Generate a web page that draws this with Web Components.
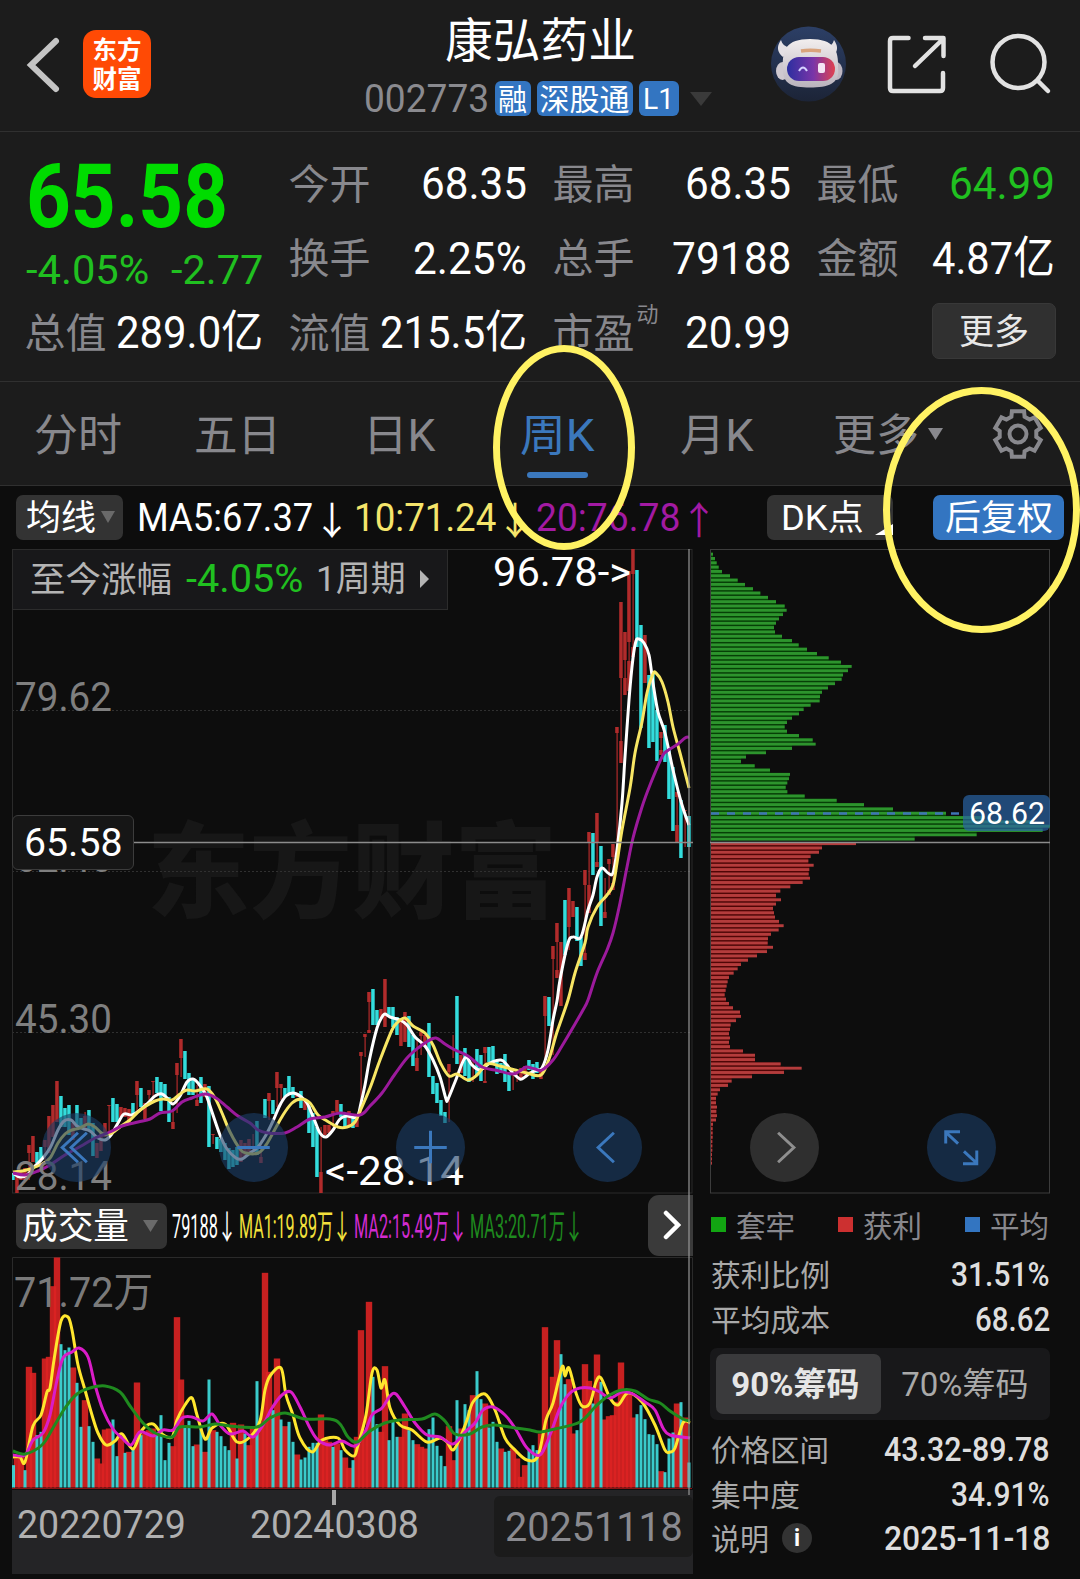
<!DOCTYPE html>
<html lang="zh-CN">
<head>
<meta charset="utf-8">
<title>康弘药业 002773</title>
<style>
  body {
    margin: 0;
    background: #0d0d0d;
    font-family: Roboto, 'Noto Sans CJK SC', sans-serif;
    color: #fff;
  }
</style>
</head>
<body>
<stock-page></stock-page>

<script>
/* ---------- helpers ---------- */

function mount(el, css, html) {
  if (!el.shadowRoot) el.attachShadow({ mode: 'open' });
  el.shadowRoot.innerHTML = `<style>*{box-sizing:border-box}${css}</style>${html}`;
}

// Catmull-Rom spline through "x,y x,y ..." points
function spline(str) {
  const p = str.trim().split(/\s+/).map(s => s.split(',').map(Number));
  let d = `M${p[0]}`;
  for (let i = 0; i < p.length - 1; i++) {
    const a = p[i - 1] || p[i], b = p[i], c = p[i + 1], e = p[i + 2] || c;
    d += `C${(b[0] + (c[0] - a[0]) / 6).toFixed(1)},${(b[1] + (c[1] - a[1]) / 6).toFixed(1)}`
      + ` ${(c[0] - (e[0] - b[0]) / 6).toFixed(1)},${(c[1] - (e[1] - b[1]) / 6).toFixed(1)} ${c}`;
  }
  return d;
}

const svgText = (x, y, w, size, fill, text, extra = '') =>
  `<text x="${x}" y="${y}" font-size="${size}" fill="${fill}" textLength="${w}" lengthAdjust="spacingAndGlyphs" ${extra}>${text}</text>`;

/* ---------- chart data ---------- */

// one token per week: r/c, then bodies "top-bottom"; the wick joins the extremes
const CANDLES = `c1173-1180 r1173-1193 r1170-1180 r1168-1180 r1145-1153/1180-1180 r1136-1162 c1152-1163 c1147-1160
r1140-1147/1160-1160 r1116-1153 r1105-1137 r1081-1122 c1096-1127 c1108-1127 c1105-1135 r1123-1140 c1105-1127 c1118-1128
r1112-1112/1116-1130 c1110-1130 c1123-1156 r1143-1158 r1133-1151 r1123-1137 r1105-1106/1133-1133 c1098-1122 c1104-1122
r1107-1117 r1108-1117 r1109-1123 c1103-1115 r1081-1095/1113-1113 c1088-1107 r1103-1119 r1090-1095/1100-1100
r1081-1082/1097-1097 c1077-1093 c1082-1111 c1084-1097 c1097-1122 r1110-1110/1122-1129 r1063-1075/1113-1113
r1039-1058/1077-1077 c1051-1079 c1073-1095 c1078-1095 r1085-1085/1100-1106 c1077-1103 r1084-1097 c1086-1147
r1134-1135/1144-1144 c1137-1149 c1139-1152 c1143-1160 c1148-1169 c1150-1167 c1147-1165 r1140-1162 r1143-1157 r1139-1153
r1134-1134/1150-1150 c1121-1155 r1140-1140/1157-1163 c1099-1118 r1093-1101/1120-1120 c1100-1114 r1072-1088/1107-1107
r1084-1088/1100-1100 c1088-1097 c1076-1095 c1087-1098 r1093-1097 c1091-1108 r1100-1110 c1106-1133 c1113-1147 c1127-1177
r1127-1127/1172-1193 r1125-1135 r1125-1133 r1111-1115/1127-1127 r1100-1112 c1104-1117 c1113-1127 r1111-1127 c1115-1128
r1115-1127 r1052-1056/1113-1113 r1034-1037/1057-1057 r992-1002/1030-1033 c989-1025 c1010-1025 r1009-1018 r979-1027
c1007-1017 c1007-1027 c1017-1035 r1020-1046 r1012-1042 c1016-1047 c1035-1066 r1040-1040/1058-1071 r1032-1036/1055-1055
r1035-1047 c1023-1077 c1076-1094 c1083-1103 c1100-1116 c1112-1123 r1064-1072/1122-1122 r1035-1035/1058-1058 c996-1064
r1055-1073 c1048-1076 c1060-1082 r1060-1060/1082-1082 c1049-1075 c1055-1081 r1047-1053/1081-1083 c1047-1062 c1046-1063
c1060-1074 c1063-1073 c1054-1082 c1072-1091 r1073-1073/1090-1090 r1070-1070/1082-1082 r1068-1080 r1066-1075 c1060-1070
c1064-1079 c1062-1073 r1070-1079 r996-1016/1063-1063 c997-1026 r946-959/1055-1055 r923-942/970-978 r942-1006 c900-955
r888-927/950-950 r901-917 c907-941 c937-966 r870-885/953-960 r832-843/885-913 c833-875 r813-843/862-867 c846-926
r878-878/912-918 r859-864/890-895 r844-857/883-890 r727-733/860-860 r602-678/741-763 r632-660/678-695 r571-642/661-691
r549-574/647-657 c570-647 c625-728 r635-683 c675-748 c673-742 c710-761 r732-738/750-755 c725-762 c747-799 c767-831
r792-797/825-842 c800-858 r810-811/847-847 c816-847`.split(/\s+/);

const MA5 = `13,1173 20,1177 27,1175 35,1166 42,1159 50,1148 58,1130 64,1121 71,1120 77,1126 84,1129 90,1131 98,1138
105,1140 111,1135 118,1123 124,1114 132,1115 140,1110 148,1103 155,1096 162,1094 168,1099 173,1104 180,1096 187,1082
193,1079 198,1083 206,1095 212,1112 220,1135 227,1149 236,1158 242,1159 250,1153 258,1147 266,1135 273,1121 280,1105
286,1096 293,1093 300,1096 307,1103 314,1119 320,1133 326,1137 333,1130 340,1119 347,1116 357,1117 361,1103 365,1085
370,1057 377,1028 382,1017 385,1014 390,1017 400,1020 407,1025 415,1037 425,1046 433,1060 440,1077 446,1099 448,1099
455,1082 465,1058 472,1065 480,1070 490,1063 501,1060 507,1065 512,1072 520,1079 525,1077 530,1073 537,1070 542,1068
548,1050 553,1020 557,1001 560,980 568,943 573,937 581,937 588,910 593,895 597,877 602,868 608,873 613,873 617,850
622,803 625,757 629,700 633,658 636,641 639,639 644,643 649,655 653,683 658,712 665,733 673,770 682,805 689,825`;
const MA10 = `13,1172 22,1171 30,1169 42,1164 50,1158 58,1143 65,1134 72,1130 80,1128 88,1124 95,1127 103,1134 112,1133
120,1127 130,1120 138,1112 146,1106 155,1101 163,1099 172,1100 180,1094 187,1090 195,1091 207,1089 215,1098 222,1113
230,1132 240,1149 246,1153 258,1153 266,1145 274,1131 283,1115 292,1103 301,1099 310,1103 318,1115 327,1121 338,1127
347,1127 355,1122 361,1109 370,1088 380,1060 392,1030 398,1022 405,1018 413,1026 425,1033 433,1045 441,1064 449,1076
457,1074 468,1080 477,1075 487,1064 500,1066 515,1070 527,1073 541,1075 549,1059 557,1032 568,1000 575,973 585,943
588,927 597,907 607,895 613,885 617,863 622,830 630,788 635,753 642,722 647,693 653,674 656,673 662,682 668,702 673,727
680,753 689,788`;
const MA20 = `13,1173 25,1175 38,1171 50,1165 65,1155 83,1145 95,1138 110,1132 122,1126 138,1122 150,1119 160,1113
172,1111 182,1102 192,1098 205,1094 216,1098 227,1107 238,1116 250,1123 258,1130 268,1133 285,1133 297,1127 310,1119
325,1117 340,1113 360,1115 370,1106 382,1093 395,1074 407,1058 418,1048 428,1041 436,1038 445,1044 455,1050 468,1056
482,1067 495,1070 512,1074 520,1071 526,1067 535,1069 542,1070 553,1060 562,1046 575,1024 583,1010 588,1000 597,973
607,950 613,933 620,903 627,867 633,838 642,807 650,785 662,757 667,751 678,744 685,738 689,737`;

// weekly volume, height in thirds of a pixel above the base line
const VOLUME = `c67 r97 r97 c52 r362 r344 c157 c167 r387 r392 r604 r690 c430 c412 c420 r360 c314 c182 r262 c184 c137 r87
r72 r174 r177 c204 c94 r152 c104 r107 c114 r315 c157 r162 r172 r177 c157 c217 c82 c134 r124 r511 r324 c180 c200 c124 r129
c177 r107 c324 r172 c167 c154 c124 c112 r194 c87 r189 c162 r127 r177 c319 r197 r644 r347 c232 r387 c204 r184 c197 c137 r99
c84 c90 c122 c134 c134 r219 r142 r137 c122 r132 c112 r90 r59 c82 r152 r472 r172 r557 c332 c190 r167 r364 c142 c202 c152
r152 r222 c172 c142 r130 r122 r117 c175 c210 c125 c95 c64 r184 r82 c262 r177 c250 c232 r277 c349 c265 r252 c180 c197 c137
r117 c107 c110 r117 r87 r32 r67 c114 c127 c112 r162 r481 c172 r332 r442 c400 c310 r325 r162 c172 c237 r370 r320 c252 r399
c317 r204 r214 r217 r257 r375 r287 r282 r210 c220 c247 c205 c160 c158 c130 r49 c46 c147 c165 r252 c256 r210 c75`.split(/\s+/);

const VMA1 = `13,1457 20,1457 25,1462 33,1426 41,1415 47,1392 50,1388 54,1360 61,1321 68,1317 72,1330 78,1365 85,1390
92,1415 98,1433 106,1445 115,1441 122,1434 133,1449 142,1430 153,1424 162,1434 172,1437 177,1420 185,1405 192,1398
197,1415 205,1439 212,1428 225,1424 237,1442 250,1437 260,1421 265,1390 270,1376 281,1368 286,1395 293,1415 300,1438
312,1452 322,1440 338,1438 345,1450 354,1456 358,1445 366,1415 372,1373 377,1370 381,1388 385,1380 390,1408 400,1425
412,1430 427,1442 440,1438 447,1442 453,1450 460,1438 467,1420 473,1402 485,1394 495,1410 505,1438 515,1450 527,1460
538,1456 546,1420 553,1403 562,1367 565,1376 569,1368 576,1393 582,1406 590,1403 596,1382 601,1378 610,1398 618,1405
628,1393 642,1402 655,1425 665,1450 670,1452 675,1448 682,1425 686,1421 690,1423`;
const VMA2 = `13,1455 25,1455 33,1440 43,1433 50,1415 57,1380 63,1358 72,1352 79,1348 88,1357 95,1385 103,1410 113,1429
122,1438 131,1445 140,1432 153,1436 163,1430 173,1430 182,1418 192,1417 203,1421 212,1414 220,1425 230,1434 243,1431
253,1437 263,1425 272,1408 282,1395 291,1392 300,1407 310,1428 318,1440 330,1445 342,1441 355,1446 365,1432 372,1415
382,1408 390,1396 396,1394 405,1407 415,1423 427,1435 440,1437 453,1444 465,1432 475,1423 483,1410 493,1407 505,1415
515,1428 527,1448 540,1455 550,1435 560,1408 570,1393 580,1388 590,1388 600,1392 610,1398 622,1392 633,1394 645,1402
655,1410 663,1428 670,1435 690,1438`;
const VMA3 = `13,1451 25,1454 42,1445 53,1428 65,1408 77,1394 90,1388 105,1386 120,1392 130,1406 143,1423 155,1433
172,1437 180,1427 200,1427 215,1424 230,1426 257,1427 270,1418 285,1413 305,1419 330,1419 340,1424 348,1437 357,1442
370,1431 385,1423 400,1420 422,1419 435,1414 445,1421 455,1434 470,1434 482,1427 495,1425 515,1428 530,1430 540,1432
555,1429 580,1422 595,1407 608,1396 622,1390 635,1391 648,1399 660,1403 670,1411 683,1419 690,1421`;

// chip distribution, bar length in thirds of a pixel
const CHIPS_LOSS = [6,12,17,23,33,57,80,102,126,148,171,195,221,227,216,204,195,189,192,213,243,263,288,318,353,390,422,
  411,396,392,372,351,333,327,326,299,278,264,243,228,221,228,264,305,314,243,165,105,90,131,177,237,234,229,224,229,281,
  377,459,546,705,822,967,1017,995,797,611];
const CHIPS_GAIN = [435,333,324,299,292,308,295,293,297,275,238,208,195,210,195,186,189,192,204,218,203,180,171,170,186,
  168,138,111,90,80,68,54,50,47,44,41,45,54,66,87,90,75,59,57,54,57,54,57,96,132,132,209,272,219,123,62,51,27,20,15,15,18,
  16,18,15,6,5,5,5,4,4,4,3,3,3];

/* ---------- text squeezed to a given width ---------- */

class FitText extends HTMLElement {
  connectedCallback() {
    const w = +this.getAttribute('w');
    mount(this, `
      :host { display: inline-block; flex: none; width: ${w}px; line-height: 1.2; white-space: nowrap; }
      span { display: inline-block; transform-origin: 0 50%; }
    `, `<span><slot></slot></span>`);
    const span = this.shadowRoot.querySelector('span');
    // CJK glyphs sit higher on the Roboto line box than digits do
    const text = this.textContent;
    const dy = /[\u4e00-\u9fff]/.test(text) && !/\d/.test(text) ? .055 : .022;
    span.style.transform = `translateY(${dy}em) scaleX(${w / span.offsetWidth})`;
  }
}

/* ---------- header ---------- */

class StockHeader extends HTMLElement {
  connectedCallback() {
    mount(this, `
      :host { display: grid; grid-template-columns: 1fr auto 1fr; height: 132px; background: #1c1c1c; border-bottom: 1px solid #303030; }
      .left { display: flex; align-items: center; gap: 22px; padding-left: 24px; height: 128px; }
      .logo { width: 68px; height: 68px; border-radius: 13px; background: #ff4a05; display: grid; place-content: center;
        font: 700 24.500px/29px 'Noto Sans CJK SC', sans-serif; text-align: center; padding-bottom: 2px; }
      .mid { display: flex; flex-direction: column; align-items: center; padding-top: 10px; }
      .title { font-size: 47px; height: 60px; }
      .sub { display: flex; align-items: center; gap: 6px; height: 57px; margin-left: -5px; font-size: 38px; color: #8a8a8f; }
      .tag { background: #3375c1; color: #fff; border-radius: 6px; height: 35px; font-size: 30px; display: flex;
        align-items: center; justify-content: center; padding-bottom: 2px; }
      .right { display: flex; align-items: center; justify-content: flex-end; height: 128px; padding-right: 24px; }
    `, `
      <div class="left">
        <svg width="37" height="60" viewBox="24 34 37 60" fill="none" stroke="#c4c4c4" stroke-width="6" stroke-linecap="round"><path d="M56 41 31 65 56 89"/></svg>
        <div class="logo">东方<br>财富</div>
      </div>
      <div class="mid">
        <fit-text class="title" w="191">康弘药业</fit-text>
        <div class="sub">
          <fit-text w="125">002773</fit-text>
          <span class="tag" style="width:36px"><fit-text w="29">融</fit-text></span>
          <span class="tag" style="width:96px"><fit-text w="90">深股通</fit-text></span>
          <span class="tag" style="width:40px"><fit-text w="31">L1</fit-text></span>
          <svg width="22" height="16" style="margin-left:5px"><path d="M0 1H22L11 15Z" fill="#3a3a3a"/></svg>
        </div>
      </div>
      <div class="right">
        <svg width="286" height="80" viewBox="770 24 286 80" fill="none">
          <defs>
            <linearGradient id="bg" x1="0" y1="0" x2="0" y2="1"><stop offset="0" stop-color="#2c3f66"/><stop offset="1" stop-color="#1c2437"/></linearGradient>
            <linearGradient id="visor"><stop offset="0" stop-color="#2c2fa0"/><stop offset=".55" stop-color="#7a35a8"/><stop offset="1" stop-color="#e0414f"/></linearGradient>
            <linearGradient id="helmet" x1="0" y1="0" x2="0" y2="1"><stop offset="0" stop-color="#f2eeee"/><stop offset="1" stop-color="#b9b3bd"/></linearGradient>
          </defs>
          <circle cx="808.500" cy="64" r="37.500" fill="url(#bg)"/>
          <path d="M781 40q-7 10 2 17l9-10q-9 1-11-7zM834 40q7 10-2 17l-9-10q9 1 11-7z" fill="#e4e0e4"/>
          <ellipse cx="782.500" cy="71" rx="6.500" ry="9" fill="#cfc9d0"/><ellipse cx="836.500" cy="71" rx="6" ry="9" fill="#bdb6c0"/>
          <path d="M783 68C782 50 786 39 810 39S839 50 838 68C840 84 828 87.500 810 87.500S782 84 783 68Z" fill="url(#helmet)"/>
          <path d="M801 51q9-1.500 20 0" stroke="#d9a37c" stroke-width="3.500"/>
          <rect x="787" y="57" width="48" height="24" rx="12" fill="url(#visor)"/>
          <path d="M799 71q4-7 8 0" stroke="#d5d0ff" stroke-width="2"/>
          <rect x="818" y="63" width="7" height="10" rx="2" fill="#f4e4f4"/>
          <g stroke="#e2e2e2" stroke-width="4.500" stroke-linecap="round" stroke-linejoin="round">
            <path d="M908.500 38H893q-3 0-3 3V88q0 3 3 3H940q3 0 3-3V73"/>
            <path d="M925 38H943.500V56M942 40 915 66"/>
            <circle cx="1018.500" cy="62" r="26"/><path d="M1038 81 1048 91"/>
          </g>
        </svg>
      </div>
    `);
  }
}

/* ---------- quote ---------- */

class QuoteCell extends HTMLElement {
  connectedCallback() {
    const a = n => this.getAttribute(n);
    mount(this, `
      :host { display: flex; align-items: center; justify-content: space-between; font-size: 45px; }
      .k { display: flex; color: #88888d; font-size: 41px; margin-left: -1.500px; }
      .v { color: ${a('color') || '#fff'}; }
      sup { font-size: 22px; line-height: 22px; width: 22px; margin: -4px -22px 0 2px; }
    `, `
      <span class="k"><fit-text w="82">${a('k')}</fit-text>${a('sup') ? `<sup>${a('sup')}</sup>` : ''}</span>
      <fit-text class="v" w="${a('w')}">${a('v')}</fit-text>
    `);
  }
}

class QuoteBoard extends HTMLElement {
  connectedCallback() {
    mount(this, `
      :host { display: grid; grid-template: repeat(3, 74.5px) / repeat(4, 237px); column-gap: 27px; height: 250px;
        padding: 14px 0 0 26px; background: #1c1c1c; border-bottom: 1px solid #303030; }
      .price { grid-row: span 2; display: flex; flex-direction: column; color: #20c020; font-size: 41px; }
      .last { font-size: 89px; font-weight: 700; color: #00dc00; line-height: 98px; height: 99px; }
      .chg { display: flex; justify-content: space-between; height: 50px; align-items: center; }
      .more { justify-self: end; align-self: center; width: 124px; height: 56px; border-radius: 7px; background: #303030;
        display: grid; place-content: center; font-size: 35px; color: #e8e8e8; border: 1px solid #383838; margin: -2px -1px 0 0; }
    `, `
      <div class="price">
        <fit-text class="last" w="202">65.58</fit-text>
        <div class="chg"><fit-text w="123">-4.05%</fit-text><fit-text w="92">-2.77</fit-text></div>
      </div>
      <quote-cell k="今开" v="68.35" w="106"></quote-cell>
      <quote-cell k="最高" v="68.35" w="106"></quote-cell>
      <quote-cell k="最低" v="64.99" w="106" color="#20c020"></quote-cell>
      <quote-cell k="换手" v="2.25%" w="114"></quote-cell>
      <quote-cell k="总手" v="79188" w="119"></quote-cell>
      <quote-cell k="金额" v="4.87亿" w="123"></quote-cell>
      <quote-cell k="总值" v="289.0亿" w="147"></quote-cell>
      <quote-cell k="流值" v="215.5亿" w="147"></quote-cell>
      <quote-cell k="市盈" sup="动" v="20.99" w="106"></quote-cell>
      <div class="more"><fit-text w="70">更多</fit-text></div>
    `);
  }
}

/* ---------- period tabs ---------- */

class PeriodTabs extends HTMLElement {
  gear() {
    const pts = [];
    for (let i = 0; i < 6; i++) {
      [[-21, 18.5], [-15, 23.5], [15, 23.5], [21, 18.5]].forEach(([da, r]) => {
        const t = (i * 60 - 90 + da) * Math.PI / 180;
        pts.push(`${(27 + r * Math.cos(t)).toFixed(1)},${(27 + r * Math.sin(t)).toFixed(1)}`);
      });
    }
    return `<svg width="54" height="54" fill="none" stroke="#88888d" stroke-width="4"><polygon points="${pts.join(' ')}"/><circle cx="27" cy="27" r="8.500"/></svg>`;
  }

  connectedCallback() {
    mount(this, `
      :host { display: grid; grid-template-columns: 160px 169px 156px 161px 153px 158px auto; align-items: center; height: 104px;
        padding-left: 34px; background: #1c1c1c; border-bottom: 1px solid #303030; font-size: 44px; color: #88888d; }
      .on { color: #3b78bd; display: flex; flex-direction: column; height: 104px; padding-top: 26px; gap: 11px; margin-left: 1px; }
      .on i { width: 61px; height: 6px; border-radius: 3px; background: #3b78bd; margin-left: 7px; }
      .more { display: flex; align-items: center; gap: 9px; }
      svg { display: block; }
    `, `
      <fit-text w="88">分时</fit-text>
      <fit-text w="87">五日</fit-text>
      <fit-text w="73">日K</fit-text>
      <span class="on"><fit-text w="75">周K</fit-text><i></i></span>
      <fit-text w="74">月K</fit-text>
      <span class="more"><fit-text w="86">更多</fit-text><svg width="15" height="12"><path d="M0 0H15L7.500 12Z" fill="#88888d"/></svg></span>
      ${this.gear()}
    `);
  }
}

/* ---------- moving average bar ---------- */

class MaBar extends HTMLElement {
  connectedCallback() {
    mount(this, `
      :host { display: flex; align-items: center; height: 63px; padding: 0 16px; font-size: 38px; }
      .btn { display: flex; align-items: center; height: 45px; border-radius: 7px; background: #333; padding: 0 0 1px 10px; font-size: 35px; }
      .y { color: #f5e56b; } .m { color: #a31aa3; }
      .arr { margin: -2px -9px 0 0; font-family: 'Noto Sans CJK SC'; }
      .dk { width: 126px; padding-left: 14px; margin-left: 58px; align-items: flex-end; }
      .dk fit-text { align-self: center; }
      .dk svg { margin: 0 0 4px 11px; }
      .fq { width: 132px; margin-left: 40px; background: #3375c1; padding-left: 12px; }
    `, `
      <span class="btn" style="width:108px"><fit-text w="70">均线</fit-text><svg width="14" height="12" style="margin-left:5px"><path d="M0 0H14L7 12Z" fill="#6a6a6a"/></svg></span>
      <fit-text w="176" style="margin-left:14px">MA5:67.37</fit-text><fit-text class="arr" w="38">↓</fit-text>
      <fit-text class="y" w="142" style="margin-left:12px">10:71.24</fit-text><fit-text class="y arr" w="38">↓</fit-text>
      <fit-text class="m" w="144" style="margin-left:11px">20:76.78</fit-text><fit-text class="m arr" w="38">↑</fit-text>
      <span class="btn dk"><fit-text w="83">DK点</fit-text><svg width="18" height="11"><path d="M18 0V11H0Z" fill="#fff"/></svg></span>
      <span class="btn fq"><fit-text w="108">后复权</fit-text></span>
    `);
  }
}

/* ---------- weekly K chart ---------- */

class KChart extends HTMLElement {
  candles() {
    return CANDLES.map((tok, i) => {
      const x = 13 + i * 4;
      const red = tok[0] === 'r';
      const bodies = tok.slice(1).split('/').map(s => s.split('-').map(Number));
      const color = red ? '#b12b2b' : '#33dcdc';
      let out = `<rect x="${x - .5}" y="${bodies[0][0]}" width="1.200" height="${bodies[bodies.length - 1][1] - bodies[0][0]}" fill="${color}"/>`;
      bodies.forEach(([t, b]) => {
        if (b > t) out += `<rect x="${x - 1.8}" y="${t}" width="3.500" height="${b - t}" fill="${color}"/>`;
      });
      return out;
    }).join('');
  }

  connectedCallback() {
    const line = (d, c) => `<path d="${spline(d)}" fill="none" stroke="${c}" stroke-width="3"/>`;
    mount(this, `
      :host { display: block; position: relative; height: 645px; }
      svg { display: block; }
      .since { position: absolute; left: 0; top: 0; width: 436px; height: 61px; background: #18181a; border: 1px solid #2c2c2c;
        display: flex; align-items: center; padding: 0 0 2px 17px; font-size: 35px; color: #b4b4b4; }
      .tag { position: absolute; left: 0; top: 266px; width: 122px; height: 55px; border: 1px solid #3c3c3c; border-radius: 6px;
        background: #161616; display: grid; place-content: center; font-size: 38px; }
    `, `
      <svg width="681" height="645" viewBox="12 549 681 645">
        ${svgText(147, 910, 410, 104, '#171717', '东方财富', 'font-weight="900" font-family="Noto Sans CJK SC"')}
        <path d="M12 710.500H692M12 871.500H692M12 1032.500H692" stroke="#303030" stroke-dasharray="2 2"/>
        <rect x="12.500" y="549.500" width="679.500" height="643.500" fill="none" stroke="#2a2a2a"/>
        ${this.candles()}
        ${line(MA5, '#fff')}${line(MA10, '#f8e664')}${line(MA20, '#9c1a9c')}
        ${svgText(15, 711, 97, 41, '#7f7f7f', '79.62')}
        ${svgText(15, 872, 97, 41, '#7f7f7f', '62.46')}
        ${svgText(15, 1033, 97, 41, '#7f7f7f', '45.30')}
        ${svgText(15, 1190, 97, 41, '#7f7f7f', '28.14')}
        ${svgText(493, 586, 138, 40, '#fff', '96.78-&gt;')}
        ${svgText(325, 1185, 139, 40, '#fff', '&lt;-28.14')}
        <path d="M12 842.500H693" stroke="#8c8c8c" stroke-width="1.300"/>
      </svg>
      <div class="since"><fit-text w="142">至今涨幅</fit-text><fit-text w="117" style="margin-left:14px;color:#20c020;font-size:39px">-4.05%</fit-text>
        <fit-text w="90" style="margin-left:13px">1周期</fit-text><svg width="9" height="18" style="margin-left:14px"><path d="M0 0 9 9 0 18Z" fill="#b4b4b4"/></svg></div>
      <div class="tag"><fit-text w="98">65.58</fit-text></div>
    `);
  }
}

/* ---------- volume ---------- */

class VolumeChart extends HTMLElement {
  // falling weeks go over the wider rising ones
  bars(kind) {
    const red = kind === 'r', w = red ? 6.4 : 3;
    return VOLUME.map((tok, i) => {
      if (tok[0] !== kind) return '';
      const h = +tok.slice(1) / 3, left = Math.max(13 + i * 4 - w / 2, 12);
      return `<rect x="${left}" y="${1487.5 - h}" width="${w}" height="${h}" fill="${red ? '#db2222' : '#3fe0e0'}" fill-opacity=".9"/>`;
    }).join('');
  }

  connectedCallback() {
    const line = (d, c) => `<path d="${spline(d)}" fill="none" stroke="${c}" stroke-width="3"/>`;
    const item = (w, c, t) => `<fit-text w="${w}" style="color:${c}">${t}</fit-text><fit-text class="arr" w="20" style="color:${c}">↓</fit-text>`;
    mount(this, `
      :host { display: block; }
      .bar { display: flex; align-items: center; height: 63px; padding-left: 4px; font-size: 33px; }
      .btn { display: flex; align-items: center; width: 151px; height: 46px; border-radius: 7px; background: #333; padding-left: 6px;
        font-size: 36px; margin-right: 5px; }
      .arr { margin: -1px 2px 0 -1px; font-family: 'Noto Sans CJK SC'; }
      .next { margin: 0 0 1px auto; width: 45px; height: 61px; border-radius: 11px 0 0 11px; background: #3a3a3a; display: grid; place-content: center; }
      svg { display: block; }
      .axis { display: flex; align-items: flex-start; position: relative; height: 84px; background: #242426; color: #b0b0b0;
        font-size: 38px; padding: 12px 0 0 5px; }
      .axis i { position: absolute; left: 320px; top: 0; width: 4px; height: 15px; background: #a8a8a8; }
      .cur { width: 199px; height: 61px; margin: -6px 0 0 auto; background: #1b1b1b; border-radius: 6px;
        display: grid; place-content: center; color: #8a8a8f; font-size: 40px; }
    `, `
      <div class="bar">
        <span class="btn"><fit-text w="107">成交量</fit-text><svg width="15" height="12" style="margin-left:14px"><path d="M0 0H15L7.500 12Z" fill="#6a6a6a"/></svg></span>
        ${item(46, '#fff', '79188')}${item(94, '#f3e13c', 'MA1:19.89万')}${item(95, '#d12bd1', 'MA2:15.49万')}${item(95, '#1e8a1e', 'MA3:20.71万')}
        <span class="next"><svg width="20" height="32" fill="none" stroke="#fff" stroke-width="4.500" stroke-linecap="round"><path d="M5 4 17 16 5 28"/></svg></span>
      </div>
      <svg width="681" height="233" viewBox="12 1257 681 233">
        <path d="M12.500 1488V1257.500H692.500V1488" fill="none" stroke="#2a2a2a"/>
        ${this.bars('r')}${this.bars('c')}
        <path d="M12 1488.500H692" stroke="#8a1414"/>
        ${svgText(14, 1307, 139, 42, '#8a8a8a', '71.72万', 'fill-opacity=".9"')}
        ${line(VMA1, '#ffe62e')}${line(VMA2, '#da1cc8')}${line(VMA3, '#1f8a1f')}
      </svg>
      <div class="axis"><i></i>
        <fit-text w="169">20220729</fit-text><fit-text w="169" style="margin-left:64px">20240308</fit-text>
        <span class="cur"><fit-text w="178">20251118</fit-text></span>
      </div>
    `);
  }
}

/* ---------- chip distribution ---------- */

class ChipChart extends HTMLElement {
  // bars plus the darker fill seen in the gaps between them
  bars(list, y0, color, gap) {
    const pitch = 4.318;
    return list.map((n, i) => {
      const y = y0 + i * pitch;
      const next = Math.min(n, list[i + 1] || 0) / 3;
      return `<rect x="711" y="${y.toFixed(2)}" width="${next}" height="${pitch}" fill="${gap}"/>`
        + `<rect x="711" y="${y.toFixed(2)}" width="${n / 3}" height="2.900" fill="${color}"/>`;
    }).join('');
  }

  connectedCallback() {
    mount(this, `
      :host { display: block; position: relative; height: 645px; }
      svg { display: block; }
      .avg { position: absolute; right: 0; top: 246px; width: 87px; height: 36px; border-radius: 6px; background: rgba(42, 100, 165, .7);
        display: grid; place-content: center; font-size: 31px; }
    `, `
      <svg width="340" height="645" viewBox="710 549 340 645">
        <rect x="710.500" y="549.500" width="339" height="643.500" fill="none" stroke="#3c3c3c"/>
        ${this.bars(CHIPS_LOSS, 552.7, '#2d942d', '#064006')}
        ${this.bars(CHIPS_GAIN, 842.2, '#b43c3c', '#500606')}
        <path d="M711 813.500H960" stroke="#3f74b5" stroke-width="2.500" stroke-dasharray="8 8"/>
        <path d="M710 842.500H1050" stroke="#8c8c8c" stroke-width="1.300"/>
      </svg>
      <div class="avg"><fit-text w="76">68.62</fit-text></div>
    `);
  }
}

class ChipStats extends HTMLElement {
  connectedCallback() {
    const row = (k, w, v, vw, extra = '') =>
      `<div class="row"><fit-text w="${w}">${k}</fit-text>${extra}<fit-text class="v" w="${vw}">${v}</fit-text></div>`;
    const key = (color, k) => `<span><i style="background:${color}"></i><fit-text w="59">${k}</fit-text></span>`;
    mount(this, `
      :host { display: block; font-size: 30px; color: #a9a9a9; }
      .legend { display: flex; justify-content: space-between; height: 58px; padding: 3px 1px 0 1px; align-items: center; color: #88888d; }
      .legend span { display: flex; align-items: center; gap: 10px; }
      .legend i { width: 15px; height: 15px; }
      .row { display: flex; align-items: center; height: 44.500px; padding-left: 1px; }
      .v { margin-left: auto; color: #dedede; font-weight: 500; font-size: 33px; }
      .seg { display: flex; margin: 7px 0; height: 72px; padding: 6px; border-radius: 7px; background: #18181a; font-size: 33px; }
      .seg span { flex: 1; display: grid; place-content: center; border-radius: 7px; }
      .seg .on { background: #3a3a3c; color: #e6e6e6; font-weight: 700; padding-right: 6px; }
      .seg span:last-child { padding-left: 5px; }
      .info { width: 30px; height: 30px; margin-left: 13px; background: #333; border-radius: 50%; display: grid; place-content: center;
        color: #fff; font-size: 23px; font-weight: 700; line-height: 1; }
    `, `
      <div class="legend">${key('#12a512', '套牢')}${key('#cc3030', '获利')}${key('#3375c1', '平均')}</div>
      ${row('获利比例', 119, '31.51%', 99)}
      ${row('平均成本', 119, '68.62', 75)}
      <div class="seg"><span class="on"><fit-text w="128">90%筹码</fit-text></span><span><fit-text w="127">70%筹码</fit-text></span></div>
      ${row('价格区间', 118, '43.32-89.78', 166)}
      ${row('集中度', 89, '34.91%', 99)}
      ${row('说明', 58, '2025-11-18', 166, '<span class="info">i</span>')}
    `);
  }
}

/* ---------- floating chart controls ---------- */

class ChartControls extends HTMLElement {
  connectedCallback() {
    const icons = [
      'M45 20 29 35 45 50M36 20 20 35 36 50',
      'M18 35H51',
      'M18 35H51M34.500 18V51',
      'M41 20 25 35 41 50',
      'M28 20 44 35 28 50',
      'M18.500 31V19H33M19 20 31 31M37 39 50 51M36 51.500H50V38'
    ];
    mount(this, `
      :host { display: flex; justify-content: space-between; position: absolute; left: 42px; top: 564px; width: 954px; }
      svg { display: block; border-radius: 50%; background: rgba(28, 62, 102, .62); }
      svg:nth-of-type(5) { background: rgba(56, 56, 56, .8); }
    `, icons.map((d, i) =>
      `<svg width="69" height="69" viewBox="0 0 69 70" fill="none" stroke="${i === 4 ? '#8f8f8f' : '#3b78bd'}" stroke-width="3"><path d="${d}"/></svg>`
    ).join(''));
  }
}

// hand-drawn style yellow ring laid over the page
class MarkRing extends HTMLElement {
  connectedCallback() {
    const [cx, cy, rx, ry] = this.getAttribute('at').split(' ').map(Number);
    mount(this, `
      :host { position: absolute; left: ${cx - rx - 3.5}px; top: ${cy - ry - 3.5}px; width: ${2 * rx + 7}px; height: ${2 * ry + 7}px;
        border: 7px solid #fff263; border-radius: 50%; box-sizing: border-box; pointer-events: none; }
    `, '');
  }
}

/* ---------- page ---------- */

class StockPage extends HTMLElement {
  connectedCallback() {
    mount(this, `
      :host { display: block; position: relative; width: 1080px; height: 1579px; overflow: hidden; background: #0d0d0d; }
      main { position: relative; display: grid; grid-template-columns: 681px 340px; column-gap: 17px; padding-left: 12px; }
      .cross { position: absolute; left: 688px; top: 0; width: 2px; height: 946px; background: rgba(150, 150, 150, .6); }
    `, `
      <stock-header></stock-header>
      <quote-board></quote-board>
      <period-tabs></period-tabs>
      <ma-bar></ma-bar>
      <main>
        <div><k-chart></k-chart><volume-chart></volume-chart></div>
        <div><chip-chart></chip-chart><chip-stats></chip-stats></div>
        <i class="cross"></i>
        <chart-controls></chart-controls>
      </main>
      <mark-ring at="564 447 67.5 99"></mark-ring>
      <mark-ring at="981 509.5 95 119.5"></mark-ring>
    `);
  }
}

customElements.define('fit-text', FitText);
customElements.define('stock-header', StockHeader);
customElements.define('quote-cell', QuoteCell);
customElements.define('quote-board', QuoteBoard);
customElements.define('period-tabs', PeriodTabs);
customElements.define('ma-bar', MaBar);
customElements.define('k-chart', KChart);
customElements.define('volume-chart', VolumeChart);
customElements.define('chip-chart', ChipChart);
customElements.define('chip-stats', ChipStats);
customElements.define('chart-controls', ChartControls);
customElements.define('mark-ring', MarkRing);
customElements.define('stock-page', StockPage);
</script>
</body>
</html>
